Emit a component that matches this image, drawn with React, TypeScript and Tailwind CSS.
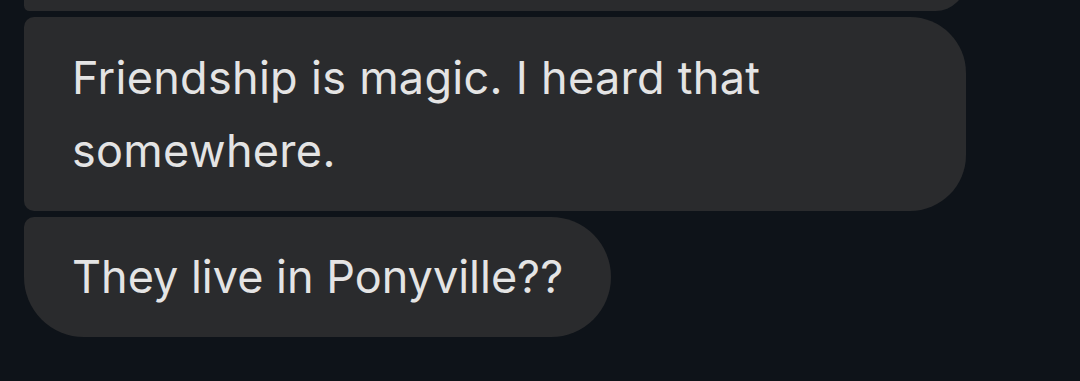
import React from 'react';

const App: React.FC = () => {
  return (
    <div className="h-[381px] w-[1080px] overflow-hidden bg-[#0e1319] font-['Inter',sans-serif] text-[#e4e4e4]">
      <div className="flex flex-col items-start gap-[6px] pl-[24px]">
        <div className="-mt-[50px] h-[61px] w-[942px] rounded-tl-[10px] rounded-bl-[10px] rounded-r-[56px] bg-[#2a2b2d]" />
        <div className="max-w-[942px] rounded-tl-[10px] rounded-bl-[10px] rounded-r-[56px] bg-[#2a2b2d] px-[48px] py-[24px] text-[45px] leading-[73px] tracking-[0.3px]">
          Friendship is magic. I heard that somewhere.
        </div>
        <div className="rounded-tl-[10px] rounded-bl-[60px] rounded-r-[60px] bg-[#2a2b2d] px-[48px] py-[24px] text-[45px] leading-[72px]">
          They live in Ponyville??
        </div>
      </div>
    </div>
  );
};

export default App;
